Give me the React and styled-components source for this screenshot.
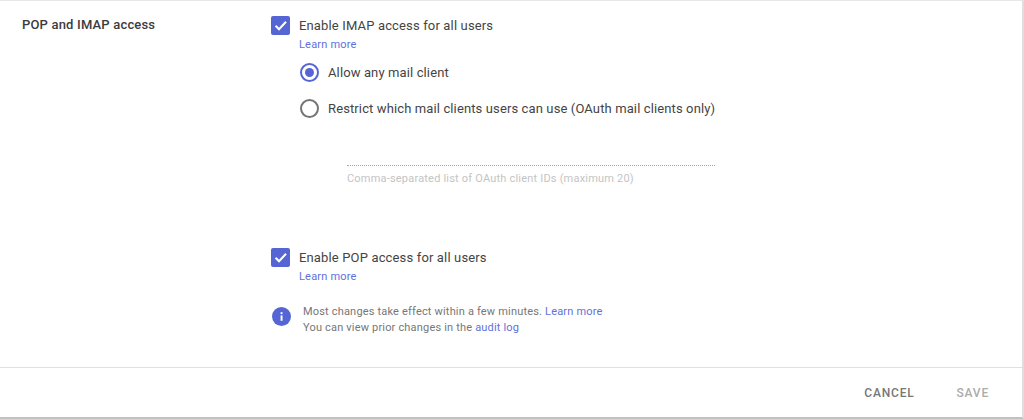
import React from "react";
import styled, { createGlobalStyle } from "styled-components";

const Global = createGlobalStyle`
  html, body { margin: 0; padding: 0; background: #fff; }
  body { font-family: Roboto, "Liberation Sans", sans-serif; overflow: hidden; }
`;
const Card = styled.div`
  width: 1024px; height: 419px; display: flex; flex-direction: column;
  box-sizing: border-box; background: #fff;
  border-top: 1px solid #e8e8e8; border-right: 2px solid #dedede; border-bottom: 2px solid #c2c2c2;
`;
const Body = styled.div`
  flex: 1; display: grid; grid-template-columns: 271px 1fr; min-height: 0; border-bottom: 1px solid #e0e0e0;
`;
const Title = styled.div`
  padding: 16px 0 0 22px; font-size: 13px; line-height: 16px; font-weight: 500; color: #3c3c3c; letter-spacing: .18px;
`;
const Settings = styled.div`
  display: flex; flex-direction: column; padding-top: 15px;
`;
const CheckRow = styled.div`
  display: flex; align-items: flex-start; gap: 9px; height: 19px;
`;
const Box = styled.span`
  width: 19px; height: 19px; border-radius: 2px; background: #5566d4; display: flex;
  align-items: center; justify-content: center; flex: none;
`;
const Label = styled.span`
  font-size: 13px; line-height: 19px; color: #444; letter-spacing: ${p => (p.$tight ? ".12px" : ".15px")};
`;
const Link = styled.a`
  color: #5f71dc; text-decoration: none;
`;
const SubLink = styled(Link)`
  display: block; margin: 2px 0 0 28px; font-size: 11px; line-height: 15px; letter-spacing: .2px;
`;
const RadioGroup = styled.div`
  display: flex; flex-direction: column; gap: 17px; margin: 11px 0 0 29px;
`;
const RadioRow = styled.div`
  display: flex; align-items: center; gap: 9px; height: 19px;
`;
const Radio = styled.span`
  width: 19px; height: 19px; box-sizing: border-box; border-radius: 50%; flex: none;
  border: 2px solid ${p => (p.$on ? "#5566d4" : "#757575")};
  display: flex; align-items: center; justify-content: center;
  &::after { content: ""; width: 9px; height: 9px; border-radius: 50%; background: ${p => (p.$on ? "#5566d4" : "transparent")}; }
`;
const ClientField = styled.div`
  margin: 47px 0 0 76px; width: 368px; border-top: 1px dotted #a8a8a8;
  padding-top: 5px; font-size: 11px; line-height: 15px; color: #c4c4c4; letter-spacing: .2px; white-space: nowrap;
`;
const PopRow = styled(CheckRow)`
  margin-top: 62px;
`;
const Notice = styled.div`
  display: flex; gap: 12px; align-items: flex-start; margin: 20px 0 0 1px;
`;
const NoticeText = styled.div`
  font-size: 11px; line-height: 16px; color: #777; letter-spacing: .18px;
`;
const Footer = styled.div`
  height: 49px; display: flex; justify-content: flex-end; align-items: center; gap: 42px; padding: 0 33px 0 0;
`;
const Action = styled.span`
  font-size: 12px; font-weight: 500; letter-spacing: .8px; color: ${p => (p.$off ? "#acacac" : "#777")};
`;
const InfoIcon = styled.svg`
  flex: none; margin-top: 3px;
`;

const Tick = () => (
  <svg width="19" height="19" viewBox="0 0 19 19" fill="none">
    <path d="M4.6 9.8 L8 13.2 L15 5.8" stroke="#fff" strokeWidth="2" />
  </svg>
);
const Info = () => (
  <InfoIcon width="19" height="19" viewBox="0 0 19 19">
    <circle cx="9.5" cy="9.5" r="9.5" fill="#5566d4" />
    <rect x="8.6" y="8.4" width="1.9" height="5.4" fill="#fff" />
    <rect x="8.6" y="5.2" width="1.9" height="1.9" fill="#fff" />
  </InfoIcon>
);

export default function App() {
  return (
    <>
      <Global />
      <Card>
        <Body>
          <Title>POP and IMAP access</Title>
          <Settings>
            <CheckRow>
              <Box><Tick /></Box>
              <Label>Enable IMAP access for all users</Label>
            </CheckRow>
            <SubLink>Learn more</SubLink>
            <RadioGroup>
              <RadioRow><Radio $on /><Label $tight>Allow any mail client</Label></RadioRow>
              <RadioRow><Radio /><Label $tight>Restrict which mail clients users can use (OAuth mail clients only)</Label></RadioRow>
            </RadioGroup>
            <ClientField>Comma-separated list of OAuth client IDs (maximum 20)</ClientField>
            <PopRow>
              <Box><Tick /></Box>
              <Label>Enable POP access for all users</Label>
            </PopRow>
            <SubLink>Learn more</SubLink>
            <Notice>
              <Info />
              <NoticeText>
                Most changes take effect within a few minutes. <Link>Learn more</Link>
                <br />
                You can view prior changes in the <Link>audit log</Link>
              </NoticeText>
            </Notice>
          </Settings>
        </Body>
        <Footer>
          <Action>CANCEL</Action>
          <Action $off>SAVE</Action>
        </Footer>
      </Card>
    </>
  );
}
